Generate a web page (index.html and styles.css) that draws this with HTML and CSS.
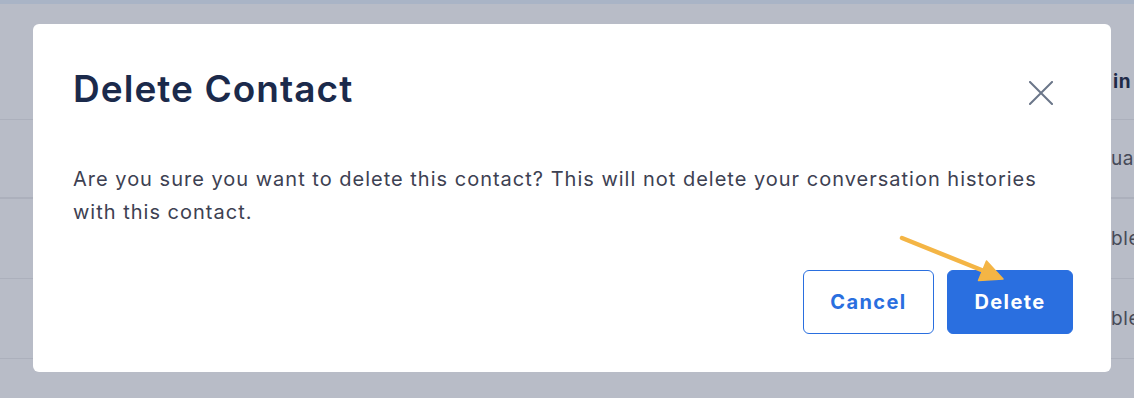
FILE: index.html
```html
<!DOCTYPE html>
<html lang="en">
<head>
<meta charset="utf-8">
<title>Delete Contact</title>
<link rel="stylesheet" href="styles.css">
</head>
<body>
  <div class="page">
    <div class="topbar"></div>
    <div class="table">
      <div class="row head"><span class="cell">in</span></div>
      <div class="row thick"><span class="cell">ua</span></div>
      <div class="row"><span class="cell">ble</span></div>
      <div class="row"><span class="cell">ble</span></div>
    </div>
  </div>

  <div class="overlay">
    <div class="modal" role="dialog" aria-labelledby="dlg-title">
      <div class="modal-header">
        <h2 id="dlg-title" class="modal-title">Delete Contact</h2>
        <button class="close" aria-label="Close">
          <svg width="24" height="24" viewBox="0 0 24 24" fill="none" stroke="#6b7689" stroke-width="2" stroke-linecap="square">
            <path d="M1 1 L23 23 M23 1 L1 23"/>
          </svg>
        </button>
      </div>
      <p class="modal-body">Are you sure you want to delete this contact? This will not delete your conversation histories with this contact.</p>
      <div class="modal-footer">
        <button class="btn btn-outline">Cancel</button>
        <button class="btn btn-primary">Delete</button>
      </div>
    </div>
    <svg class="arrow" width="115" height="60" viewBox="0 0 115 60">
      <line x1="7" y1="6" x2="89" y2="39" stroke="#f4b545" stroke-width="4.5" stroke-linecap="round"/>
      <polygon points="108,47 83.5,48.5 91.5,29" fill="#f4b545" stroke="#f4b545" stroke-width="1.5" stroke-linejoin="round"/>
    </svg>
  </div>
</body>
</html>
```
FILE: styles.css
```css
* { box-sizing: border-box; }

html, body {
  margin: 0;
  padding: 0;
}

body {
  width: 1134px;
  height: 398px;
  overflow: hidden;
  background: #b8bcc7;
  font-family: Inter, "Noto Sans", "Liberation Sans", sans-serif;
  position: relative;
}

.page {
  display: flex;
  flex-direction: column;
}

.topbar {
  height: 4px;
  background: #a9b4c6;
}

.table {
  display: flex;
  flex-direction: column;
}

.row {
  height: 80px;
  border-bottom: 1px solid #acb0bc;
  display: flex;
  align-items: center;
  justify-content: flex-end;
}

.row.head {
  height: 116px;
  align-items: flex-start;
  padding-top: 66px;
}

.row.thick {
  height: 79px;
  border-bottom: 2px solid #acb0bc;
}

.cell {
  width: 22px;
  overflow: hidden;
  white-space: nowrap;
  font-size: 19px;
  letter-spacing: 0.6px;
  color: #464a58;
  text-indent: -1px;
}

.row.head .cell {
  font-weight: 700;
  color: #1e2a47;
  text-indent: 1px;
}

.overlay {
  position: absolute;
  inset: 0;
  padding: 24px 23px 26px 33px;
}

.modal {
  background: #ffffff;
  border-radius: 6px;
  width: 1078px;
  height: 348px;
  padding: 0 38px 38px 40px;
  display: flex;
  flex-direction: column;
}

.modal-header {
  display: flex;
  align-items: center;
  justify-content: space-between;
  height: 133px;
}

.modal-title {
  margin: 0;
  font-size: 37px;
  font-weight: 600;
  color: #1b2a4b;
  letter-spacing: 1.05px;
  line-height: 44px;
  margin-top: -4px;
}

.close {
  background: none;
  border: 0;
  padding: 0;
  width: 24px;
  height: 24px;
  margin-right: 20px;
  margin-top: 4px;
  display: flex;
}

.modal-body {
  margin: 0;
  font-size: 20px;
  line-height: 33px;
  letter-spacing: 1px;
  color: #3d4152;
  padding-top: 6px;
}

.modal-footer {
  margin-top: auto;
  display: flex;
  justify-content: flex-end;
  gap: 13px;
}

.btn {
  height: 64px;
  border-radius: 6px;
  font-family: Inter, "Noto Sans", "Liberation Sans", sans-serif;
  font-size: 20px;
  font-weight: 700;
  letter-spacing: 1.4px;
  cursor: pointer;
}

.btn-outline {
  width: 131px;
  background: #ffffff;
  border: 1px solid #2a6fdf;
  color: #2a6fdf;
}

.btn-primary {
  width: 126px;
  background: #2a6fe0;
  border: 1px solid #2a6fe0;
  color: #ffffff;
}

.arrow {
  position: absolute;
  left: 895px;
  top: 232px;
}
```
